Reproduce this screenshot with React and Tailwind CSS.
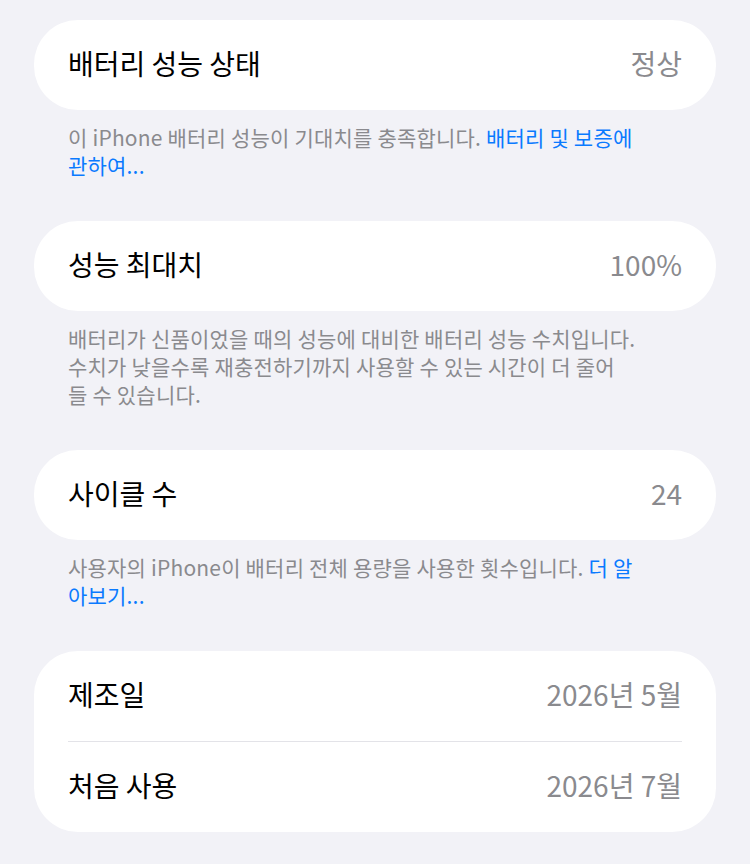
import React from "react";

const font = { fontFamily: '"Noto Sans CJK KR", "Noto Sans", sans-serif' };

const Row = ({ label, value }) => (
  <div className="flex h-[90px] items-center justify-between px-[34px] pb-[4px]">
    <span className="text-[28px] text-black">{label}</span>
    <span className="text-[28px] text-[#8a8a8e]">{value}</span>
  </div>
);

const Card = ({ children }) => (
  <div className="mx-[34px] overflow-hidden rounded-[44px] bg-white">{children}</div>
);

const Footnote = ({ children }) => (
  <p className="mx-[68px] mt-[13px] mb-[42px] text-[21px] leading-[28px] tracking-[0.2px] text-[#8a8a8e] whitespace-nowrap">
    {children}
  </p>
);

export default function App() {
  return (
    <div
      className="min-h-screen w-full bg-[#f2f2f7] pt-[20px] pb-[30px]"
      style={font}
    >
      <Card>
        <Row label="배터리 성능 상태" value="정상" />
      </Card>
      <Footnote>
        이 iPhone 배터리 성능이 기대치를 충족합니다.{" "}
        <span className="text-[#0a7aff]">배터리 및 보증에</span>
        <br />
        <span className="text-[#0a7aff]">관하여...</span>
      </Footnote>

      <Card>
        <Row label="성능 최대치" value="100%" />
      </Card>
      <Footnote>
        배터리가 신품이었을 때의 성능에 대비한 배터리 성능 수치입니다.
        <br />
        수치가 낮을수록 재충전하기까지 사용할 수 있는 시간이 더 줄어
        <br />
        들 수 있습니다.
      </Footnote>

      <Card>
        <Row label="사이클 수" value="24" />
      </Card>
      <Footnote>
        사용자의 iPhone이 배터리 전체 용량을 사용한 횟수입니다.{" "}
        <span className="text-[#0a7aff]">더 알</span>
        <br />
        <span className="text-[#0a7aff]">아보기...</span>
      </Footnote>

      <Card>
        <Row label="제조일" value="2026년 5월" />
        <div className="mx-[34px] h-px bg-[#e3e3e8]" />
        <Row label="처음 사용" value="2026년 7월" />
      </Card>
    </div>
  );
}
